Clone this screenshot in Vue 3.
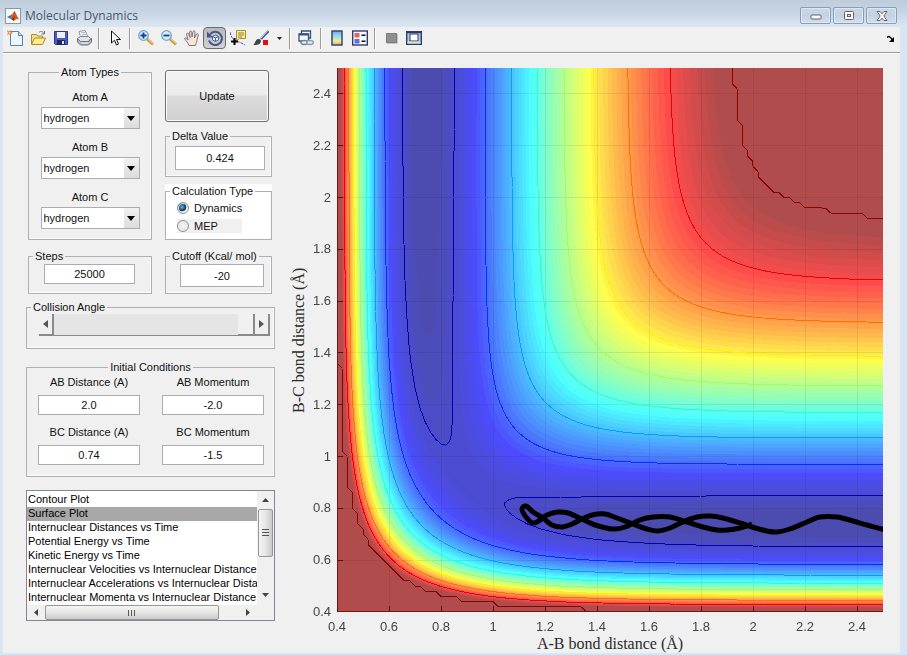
<script setup>
import { onMounted, ref } from 'vue'

const atoms = [
  { id: 'atom-a', label: 'Atom A' },
  { id: 'atom-b', label: 'Atom B' },
  { id: 'atom-c', label: 'Atom C' },
]
const elements = ['hydrogen', 'deuterium', 'fluorine', 'chlorine']
const atomTypes = ref(['hydrogen', 'hydrogen', 'hydrogen'])
const delta = ref('0.424')
const mode = ref('dynamics')
const steps = ref('25000')
const cutoff = ref('-20')
const angle = ref(180)
const conditions = ref([
  { id: 'ab-distance', label: 'AB Distance (A)', value: '2.0' },
  { id: 'ab-momentum', label: 'AB Momentum', value: '-2.0' },
  { id: 'bc-distance', label: 'BC Distance (A)', value: '0.74' },
  { id: 'bc-momentum', label: 'BC Momentum', value: '-1.5' },
])
const plots = [
  'Contour Plot',
  'Surface Plot',
  'Internuclear Distances vs Time',
  'Potential Energy vs Time',
  'Kinetic Energy vs Time',
  'Internuclear Velocities vs Internuclear Distance',
  'Internuclear Accelerations vs Internuclear Distance',
  'Internuclear Momenta vs Internuclear Distance',
]
const plotType = ref('Surface Plot')

// LEPS potential of the collinear H + H2 system, kcal/mol
const D = 109.5
const BETA = 1.942
const R0 = 0.7414
const SATO = 0.185
const V_MAX = -21.8
const V_MIN = -109.5

function pair(r) {
  const e = Math.exp(-BETA * (r - R0))
  return {
    q: (D / 4) * ((3 + SATO) * e * e - (2 + 6 * SATO) * e),
    j: (D / 4) * ((1 + 3 * SATO) * e * e - (6 + 2 * SATO) * e),
  }
}
function potential(ab, bc) {
  const a = pair(ab)
  const b = pair(bc)
  const c = pair(ab + bc)
  const root = Math.sqrt(((a.j - b.j) ** 2 + (b.j - c.j) ** 2 + (c.j - a.j) ** 2) / 2)
  return Math.min(V_MAX, (a.q + b.q + c.q - root) / (1 + SATO))
}

// 64-step jet colour map
function ramp(j) {
  if (j < 1 || j > 47) return 0
  if (j <= 16) return j / 16
  return j <= 31 ? 1 : (48 - j) / 16
}
function jet(v) {
  const t = (v - V_MIN) / (V_MAX - V_MIN)
  const i = 1 + Math.max(0, Math.min(62, Math.floor(t * 64)))
  return [ramp(i - 24), ramp(i - 8), ramp(i + 8)]
}

const LOW = 0.4
const SPAN = 2.1
const W = 546
const H = 544
const px = (r) => ((r - LOW) / SPAN) * W
const py = (r) => H - ((r - LOW) / SPAN) * H

// Contour lines by marching squares
const N = 105
const grid = Array.from({ length: N + 1 }, (_, i) =>
  Array.from({ length: N + 1 }, (_, k) => potential(LOW + i * 0.02, LOW + k * 0.02)),
)
function contour(level) {
  let d = ''
  for (let i = 0; i < N; i++) {
    for (let k = 0; k < N; k++) {
      const c = [[i, k], [i + 1, k], [i + 1, k + 1], [i, k + 1]]
      const cuts = []
      for (let s = 0; s < 4; s++) {
        const [p, q] = [c[s], c[(s + 1) % 4]]
        const a = grid[p[0]][p[1]] - level
        const b = grid[q[0]][q[1]] - level
        if (a < 0 === b < 0) continue
        const t = a / (a - b)
        const x = LOW + 0.02 * (p[0] + t * (q[0] - p[0]))
        const y = LOW + 0.02 * (p[1] + t * (q[1] - p[1]))
        cuts.push(px(x).toFixed(1) + ' ' + py(y).toFixed(1))
      }
      if (cuts.length >= 2) d += `M${cuts[0]}L${cuts[1]}`
    }
  }
  return d
}
const levels = [-105.4, -95.3, -84.9, -74.5, -64.1, -53.6, -43.2, -32.7, V_MAX - 0.001]
const contours = levels.map((v) => ({
  v,
  d: contour(v),
  color: `rgb(${jet(v).map((c) => Math.round(c * 255)).join(',')})`,
}))

const ticks = Array.from({ length: 11 }, (_, i) => {
  const v = (4 + 2 * i) / 10
  return { v, x: px(v), y: py(v), pct: ((v - LOW) / SPAN) * 100 }
})

// Reaction path in plot units
const path = [
  [415, 456], [403, 460], [390, 462], [380, 462], [366, 459], [350, 454], [333, 449], [316, 449],
  [303, 452], [288, 459], [276, 461], [258, 457], [245, 451], [231, 445], [221, 444], [210, 447],
  [203, 452], [196, 455], [189, 449], [185, 441], [189, 438], [196, 444], [206, 450], [215, 457],
  [225, 459], [235, 456], [245, 451], [255, 447], [268, 446], [280, 450], [296, 456], [310, 461],
  [321, 463], [333, 460], [346, 454], [360, 449], [373, 448], [386, 450], [403, 455], [415, 459],
  [430, 463], [440, 464], [453, 461], [470, 454], [483, 449], [500, 449], [516, 453], [530, 457],
  [548, 462],
]
let trajectory = `M${path[0]}`
for (let i = 0; i < path.length - 1; i++) {
  const a = path[Math.max(0, i - 1)]
  const b = path[i]
  const c = path[i + 1]
  const e = path[Math.min(path.length - 1, i + 2)]
  trajectory += `C${b[0] + (c[0] - a[0]) / 6},${b[1] + (c[1] - a[1]) / 6} ${c[0] - (e[0] - b[0]) / 6},${c[1] - (e[1] - b[1]) / 6} ${c}`
}

const surface = ref(null)
onMounted(() => {
  const ctx = surface.value.getContext('2d')
  const img = ctx.createImageData(W, H)
  for (let y = 0; y < H; y++) {
    for (let x = 0; x < W; x++) {
      const v = potential(LOW + ((x + 0.5) / W) * SPAN, LOW + ((H - y - 0.5) / H) * SPAN)
      const o = (y * W + x) * 4
      jet(v).forEach((c, n) => {
        img.data[o + n] = 76 + c * 178
      })
      img.data[o + 3] = 255
    }
  }
  ctx.putImageData(img, 0, 0)
})
</script>

<template>
  <div class="window">
    <header class="titlebar">
      <svg class="logo" viewBox="0 0 16 16" aria-hidden="true">
        <rect x=".5" y=".5" width="15" height="15" fill="#f6f8fa" stroke="#8b97a5" />
        <path d="M2 9l4-2 2-2-2 6z" fill="#3b76b5" />
        <path d="M5 11c2-1 3-7 4.500-8 1.500 2 3 6 4.500 9-2-2-3-1-5 1-1-1-2-2-4-2z" fill="#d9541e" />
        <path d="M9.500 3c.5 3-.5 7-3 8.500 1 0 2 1 2.500 1.500z" fill="#7c2412" />
      </svg>
      <h1>Molecular Dynamics</h1>
      <div class="window-buttons">
        <button type="button" aria-label="Minimize">
          <svg viewBox="0 0 12 10"><rect x="1" y="4" width="10" height="4" rx="1" fill="#fff" stroke="#59636f" /></svg>
        </button>
        <button type="button" aria-label="Maximize">
          <svg viewBox="0 0 12 10"><rect x="1.500" y=".5" width="9" height="8" rx="1" fill="#fff" stroke="#59636f" /><rect x="4.500" y="3.500" width="3" height="2" fill="#dfe8f1" stroke="#59636f" /></svg>
        </button>
        <button type="button" aria-label="Close">
          <svg viewBox="0 0 12 10"><path d="M1 .5h3l2 2.300 2-2.300h3L7.800 5 11 9.500H8L6 7.200 4 9.500H1L4.200 5z" fill="#fff" stroke="#59636f" /></svg>
        </button>
      </div>
    </header>

    <nav class="toolbar" aria-label="Figure tools">
      <button type="button" aria-label="New figure">
        <svg viewBox="0 0 16 16"><path d="M3.500 1.500h8l4 4v10h-12z" fill="#eef5fd" stroke="#5b7fae" /><path d="M11.500 1.500v4h4" fill="#c8dcf2" stroke="#5b7fae" /><path d="M0 0l2 1.500L3.500 0 4 2l2 1-2 1-.5 2L2 4 0 5l1-2z" fill="#e07a34" /><circle cx="2.600" cy="2.800" r="1" fill="#ffe6a8" /></svg>
      </button>
      <button type="button" aria-label="Open">
        <svg viewBox="0 0 16 16"><path d="M1.500 14V4.500h5l1 1.500h5v2" fill="#f7df84" stroke="#b58a1c" /><path d="M1.500 14.500l3-6.500h11l-3 6.500z" fill="#fdeb96" stroke="#b58a1c" /><path d="M9 2.500c2-2 4-1 5 1M14.500 1v3h-3" fill="none" stroke="#5a77a8" /></svg>
      </button>
      <button type="button" aria-label="Save">
        <svg viewBox="0 0 16 16"><path d="M1.500 1.500h13v13h-12l-1-1z" fill="#4a5cc4" stroke="#2c378c" /><rect x="4" y="2" width="8" height="6" fill="#eef1fb" /><rect x="4" y="10" width="8" height="5" fill="#20285e" /><rect x="9" y="11" width="2" height="3" fill="#dfe4f5" /></svg>
      </button>
      <button type="button" aria-label="Print">
        <svg viewBox="0 0 16 16"><path d="M4.500 7L3 1.500l6-1L12 7z" fill="#fff" stroke="#8c9aab" /><path d="M5 3l4-.6M5.500 5l4.500-.5" stroke="#8fb0dc" /><path d="M1.500 8.500l3-2h8l2 2-2 3h-10z" fill="#e2e4e7" stroke="#7d848c" /><path d="M1.500 8.500v3.500l3 3h8l3-3V8.500l-3 3h-8z" fill="#b4b9bf" stroke="#6c737b" /><path d="M5 13h7" stroke="#f2f4f6" /></svg>
      </button>
      <span class="sep"></span>
      <button type="button" aria-label="Edit plot">
        <svg viewBox="0 0 16 16"><path d="M4.500 1v12l3-2.800 2 4.800 2-1-2-4.500h4z" fill="#fff" stroke="#111" /></svg>
      </button>
      <span class="sep"></span>
      <button type="button" aria-label="Zoom in">
        <svg viewBox="0 0 16 16"><path d="M9 9l6 5.500" stroke="#d99a3c" stroke-width="3" /><path d="M9.500 8.500l6 5.500" stroke="#f3cf8b" /><circle cx="5.500" cy="5.500" r="4.800" fill="#d4ecfa" stroke="#6fa5d0" stroke-width="1.300" /><path d="M5.500 2.500v6M2.500 5.500h6" stroke="#1c3f8c" stroke-width="1.800" /></svg>
      </button>
      <button type="button" aria-label="Zoom out">
        <svg viewBox="0 0 16 16"><path d="M9 9l6 5.500" stroke="#d99a3c" stroke-width="3" /><path d="M9.500 8.500l6 5.500" stroke="#f3cf8b" /><circle cx="5.500" cy="5.500" r="4.800" fill="#d4ecfa" stroke="#6fa5d0" stroke-width="1.300" /><path d="M2.500 5.500h6" stroke="#1c3f8c" stroke-width="1.800" /></svg>
      </button>
      <button type="button" aria-label="Pan">
        <svg viewBox="0 0 16 16"><path d="M5 15.500c-1-3-3-4.500-4.500-7 1-1 2.500-.5 3.500 1.500L2.500 4c.5-1.500 2-1 2.300 0L6 7.500 5.500 2c.5-1.500 2-1.200 2.200 0L8 7l1-5.500c.6-1 2-.8 2 .5L10.500 8l2-4c1-1 2-.3 1.800 1L13 10c0 2-1 3-1.500 5.500z" fill="#fbe3d1" stroke="#6f6b78" stroke-width=".9" /></svg>
      </button>
      <button type="button" class="pressed" aria-label="Rotate 3D" aria-pressed="true">
        <svg viewBox="0 0 16 16"><path d="M3 4.500A6.600 6.600 0 1 1 2 10.500" fill="none" stroke="#42558b" stroke-width="2" /><path d="M0 1.500v6h6z" fill="#42558b" /><path d="M5.500 6.500l3-1.500 3 1.500v3.500l-3 1.500-3-1.500zM5.500 6.500l3 1.500 3-1.500M8.500 8v3.500" fill="#eef2fa" stroke="#42558b" stroke-width=".9" /></svg>
      </button>
      <button type="button" aria-label="Data cursor">
        <svg viewBox="0 0 16 16"><path d="M0 2c1 5 3 8 6 9s6 2 9 4" fill="none" stroke="#4a4fd0" stroke-dasharray="3 1" /><path d="M6.500.5h9v8h-6l-3 2z" fill="#f7ee8d" stroke="#a09434" /><path d="M8 3h6M8 5h6M8 7h4" stroke="#8c8240" /><path d="M4.500 8v7M1 11.500h7" stroke="#000" stroke-width="2" /></svg>
      </button>
      <button type="button" aria-label="Brush">
        <svg viewBox="0 0 16 16"><path d="M15.500 1L8 9" stroke="#4a5ca8" stroke-width="2.500" /><path d="M14.500 1L8 8" stroke="#cfd7f2" /><path d="M0 15c2-1 2-4 4-5.500 2-1 4 0 4 1.500 0 2.500-3 4.500-8 4z" fill="#3e434c" /><rect x="10" y="10" width="5" height="5" fill="#e80c0c" /></svg>
      </button>
      <button type="button" class="drop" aria-label="Brush options">
        <svg viewBox="0 0 5 3"><path d="M0 0h5L2.500 3z" fill="#222" /></svg>
      </button>
      <span class="sep"></span>
      <button type="button" aria-label="Link plots">
        <svg viewBox="0 0 16 16"><path d="M3.500 4V1h9v7H11" fill="#f3f7fc" stroke="#34507f" stroke-width="1.300" /><path d="M1 4h9.500v7H1z" fill="#f3f7fc" stroke="#34507f" stroke-width="1.300" /><path d="M1 4.500h9.500" stroke="#34507f" stroke-width="2" /><ellipse cx="6.500" cy="12.500" rx="3.500" ry="2" fill="#e4ebf3" stroke="#72849e" stroke-width="1.400" /><ellipse cx="12" cy="12.500" rx="3.300" ry="2" fill="#e4ebf3" stroke="#8b9cb4" stroke-width="1.400" /></svg>
      </button>
      <span class="sep"></span>
      <button type="button" aria-label="Insert colorbar">
        <svg viewBox="0 0 16 16">
          <defs><linearGradient id="bar" x1="0" y1="0" x2="0" y2="1"><stop offset="0" stop-color="#8c9bf0" /><stop offset=".35" stop-color="#86dff2" /><stop offset=".7" stop-color="#f4ec96" /><stop offset="1" stop-color="#f2a07c" /></linearGradient></defs>
          <rect x="3" y="1" width="10" height="14" fill="url(#bar)" stroke="#2c3e68" stroke-width="1.400" />
        </svg>
      </button>
      <button type="button" aria-label="Insert legend">
        <svg viewBox="0 0 16 16"><rect x=".7" y="1" width="14.600" height="14" fill="#fbfcff" stroke="#2c3e68" stroke-width="1.400" /><rect x="2.500" y="3" width="5" height="4.500" fill="#e86060" /><rect x="2.500" y="9" width="5" height="4.500" fill="#5d6fe0" /><path d="M9.500 5.300h4M9.500 11.300h4" stroke="#111" stroke-width="1.400" /></svg>
      </button>
      <span class="sep"></span>
      <button type="button" aria-label="Hide plot tools" disabled>
        <svg viewBox="0 0 16 16"><rect x="3.500" y="3.500" width="10" height="9" fill="#8f8f8f" stroke="#7d7d7d" /><path d="M4 13.500h10.500V4" fill="none" stroke="#c4c4c4" /></svg>
      </button>
      <button type="button" aria-label="Show plot tools">
        <svg viewBox="0 0 16 16"><rect x=".7" y="1.700" width="14.600" height="12.600" fill="#b4c6dc" stroke="#2c3e68" stroke-width="1.400" /><path d="M.5 2.500h15" stroke="#2c3e68" stroke-width="1.500" /><rect x="4" y="4" width="8" height="7" fill="#fff" stroke="#2c3e68" /><path d="M1.500 12.500h13" stroke="#dfe3d2" stroke-width="2" /></svg>
      </button>
      <button type="button" class="dock" aria-label="Dock figure">
        <svg viewBox="0 0 8 7"><path d="M7 2v5H2z" fill="#000" /><path d="M0 2.500C2 .5 3.500 2 5.500 5" fill="none" stroke="#000" stroke-width="1.500" /></svg>
      </button>
    </nav>

    <main class="content">
      <form class="panel" @submit.prevent>
        <div class="columns">
          <fieldset class="group atoms">
            <legend>Atom Types</legend>
            <div v-for="(atom, i) in atoms" :key="atom.id" class="atom">
              <label :for="atom.id">{{ atom.label }}</label>
              <div class="combo">
                <select :id="atom.id" v-model="atomTypes[i]">
                  <option v-for="el in elements" :key="el">{{ el }}</option>
                </select>
                <span class="arrow"><svg viewBox="0 0 8 5"><path d="M0 0h8L4 5z" /></svg></span>
              </div>
            </div>
          </fieldset>

          <div class="stack">
            <button type="submit" class="update">Update</button>
            <fieldset class="group delta">
              <legend>Delta Value</legend>
              <input v-model="delta" type="text" aria-label="Delta Value" />
            </fieldset>
            <div class="white">
              <fieldset class="group calc">
                <legend>Calculation Type</legend>
                <label><input v-model="mode" type="radio" name="mode" value="dynamics" />Dynamics</label>
                <label class="shaded"><input v-model="mode" type="radio" name="mode" value="mep" />MEP</label>
              </fieldset>
            </div>
          </div>

          <fieldset class="group steps">
            <legend>Steps</legend>
            <input v-model="steps" type="text" aria-label="Steps" />
          </fieldset>
          <fieldset class="group cutoff">
            <legend>Cutoff (Kcal/ mol)</legend>
            <input v-model="cutoff" type="text" aria-label="Cutoff (Kcal/ mol)" />
          </fieldset>
        </div>

        <fieldset class="group collision">
          <legend>Collision Angle</legend>
          <div class="slider">
            <button type="button" aria-label="Decrease angle"><svg viewBox="0 0 5 8"><path d="M5 0v8L0 4z" /></svg></button>
            <input v-model="angle" type="range" min="0" max="180" aria-label="Collision Angle" />
            <button type="button" aria-label="Increase angle"><svg viewBox="0 0 5 8"><path d="M0 0v8l5-4z" /></svg></button>
          </div>
        </fieldset>

        <fieldset class="group initial">
          <legend>Initial Conditions</legend>
          <div class="conditions">
            <div v-for="c in conditions" :key="c.id" class="condition">
              <label :for="c.id">{{ c.label }}</label>
              <input :id="c.id" v-model="c.value" type="text" />
            </div>
          </div>
        </fieldset>

        <div class="listbox">
          <select v-model="plotType" size="8" aria-label="Plot type">
            <option v-for="p in plots" :key="p">{{ p }}</option>
          </select>
          <div class="vbar">
            <svg viewBox="0 0 7 4"><path d="M0 4h7L3.500 0z" /></svg>
            <span class="thumb"><i></i><i></i><i></i></span>
            <svg viewBox="0 0 7 4"><path d="M0 0h7L3.500 4z" /></svg>
          </div>
          <div class="hbar">
            <svg viewBox="0 0 4 7"><path d="M4 0v7L0 3.500z" /></svg>
            <span class="thumb"><i></i><i></i><i></i></span>
            <svg viewBox="0 0 4 7"><path d="M0 0v7l4-3.500z" /></svg>
          </div>
        </div>
      </form>

      <figure class="figure">
        <div class="ylabel">B-C bond distance (Å)</div>
        <div class="yticks">
          <span v-for="t in ticks" :key="t.v" :style="{ bottom: t.pct + '%' }">{{ t.v }}</span>
        </div>
        <canvas ref="surface" class="surface" :width="W" :height="H"></canvas>
        <svg class="overlay" :viewBox="`0 0 ${W} ${H}`" preserveAspectRatio="none" aria-hidden="true">
          <g class="gridlines">
            <path v-for="t in ticks" :key="t.v" :d="`M${t.x} 0V${H}M0 ${t.y}H${W}`" />
          </g>
          <path v-for="c in contours" :key="c.v" class="contour" :d="c.d" :stroke="c.color" />
          <path class="axis" :d="`M.5 0V${H - 0.5}H${W}`" />
          <g class="tickmarks">
            <path v-for="t in ticks" :key="t.v" :d="`M${t.x} ${H}v-6M0 ${t.y}h6`" />
          </g>
          <path class="trajectory" :d="trajectory" />
        </svg>
        <div class="xticks">
          <span v-for="t in ticks" :key="t.v" :style="{ left: t.pct + '%' }">{{ t.v }}</span>
        </div>
        <figcaption class="xlabel">A-B bond distance (Å)</figcaption>
      </figure>
    </main>
  </div>
</template>

<style>
body {
  margin: 0;
  background: #f0f0f0;
}
</style>

<style scoped>
* {
  box-sizing: border-box;
}
.window {
  display: flex;
  flex-direction: column;
  min-height: 100vh;
  border: solid #d9e5f2;
  border-width: 0 7px 2px 3px;
  background: #f0f0f0;
  color: #111;
  font: 11px/14px 'Liberation Sans', Arial, sans-serif;
}
button,
input,
select {
  margin: 0;
  padding: 0;
  font: inherit;
  color: inherit;
}
svg {
  display: block;
}

.titlebar {
  display: flex;
  align-items: center;
  gap: 4px;
  height: 27px;
  margin: 0 -7px 0 -3px;
  padding: 4px 10px 0 5px;
  background: linear-gradient(#bfccda, #c6d3e2 40%, #dbe6f2);
}
.logo {
  width: 16px;
  height: 16px;
}
h1 {
  margin: 0;
  font: 12px/16px 'Open Sans', 'Noto Sans', sans-serif;
  color: #44586e;
}
.window-buttons {
  display: flex;
  gap: 2px;
  margin-left: auto;
}
.window-buttons button {
  display: grid;
  place-items: center;
  width: 31px;
  height: 17px;
  border: 1px solid #8a9db3;
  border-radius: 2px;
  background: linear-gradient(#cbd8e6, #c3d1e1 50%, #d3dfec);
  box-shadow: inset 0 0 0 1px #dde7f1;
}
.window-buttons svg {
  width: 12px;
  height: 10px;
}

.toolbar {
  display: flex;
  align-items: center;
  height: 26px;
  padding-bottom: 3px;
  border-bottom: 1px solid #9a9a9a;
  box-shadow: 0 1px #fff;
}
.toolbar button {
  display: grid;
  place-items: center;
  width: 23px;
  height: 22px;
  border: 1px solid transparent;
  background: none;
}
.toolbar button svg {
  width: 16px;
  height: 16px;
  fill: none;
}
.toolbar .pressed {
  border-color: #6b6b6b;
  border-radius: 4px;
  background: linear-gradient(#b9b9b9, #d2d2d2);
}
.toolbar .drop {
  width: 14px;
}
.toolbar .drop svg {
  width: 5px;
  height: 3px;
}
.toolbar .dock {
  width: 18px;
  margin-left: auto;
}
.toolbar .dock svg {
  width: 8px;
  height: 7px;
}
.sep {
  width: 2px;
  height: 21px;
  margin: 0 3px;
  border-left: 1px solid #9c9c9c;
  border-right: 1px solid #fff;
}

.content {
  display: flex;
  flex: 1;
  padding-top: 1px;
}
.panel {
  flex: none;
  width: 287px;
  padding: 11px 15px 0 23px;
}
.columns {
  display: grid;
  grid-template-columns: 124px 107px;
  gap: 9px 13px;
  padding: 0 2px;
}
.group {
  min-width: 0;
  margin: 0;
  padding: 0;
  border: 1px solid #b0b0b0;
  box-shadow: inset -1px -1px #fbfbfb;
}
.group legend {
  margin-left: 4px;
  padding: 0 2px;
  line-height: 14px;
}
.group input[type='text'] {
  display: block;
  border: 1px solid #abadb3;
  border-radius: 0;
  background: #fff;
  text-align: center;
}
.group.atoms {
  height: 175px;
}
.group.atoms legend,
.group.initial legend {
  margin: 0 auto;
}
.atom {
  margin: 11px 0 0;
  text-align: center;
}
.atom label {
  display: block;
}
.combo {
  display: grid;
  grid-template-columns: 1fr 15px;
  width: 99px;
  height: 22px;
  margin: 3px auto 0;
  border: 1px solid #abadb3;
  background: #fff;
}
.combo select {
  grid-area: 1 / 1 / 2 / 3;
  padding-left: 2px;
  border: 0;
  background: none;
  appearance: none;
}
.combo .arrow {
  display: grid;
  place-items: center;
  grid-area: 1 / 2;
  background: linear-gradient(#f2f2f2, #dcdcdc);
  pointer-events: none;
}
.arrow svg {
  width: 8px;
  height: 5px;
}
.stack {
  display: flex;
  flex-direction: column;
  gap: 7px;
  padding-top: 5px;
}
.update {
  width: 104px;
  height: 52px;
  border: 1px solid #707070;
  border-radius: 3px;
  background: linear-gradient(#f2f2f2, #ebebeb 48%, #dddddd 50%, #cfcfcf);
  box-shadow: inset 0 0 0 1px #fafafa;
}
.group.delta {
  height: 48px;
}
.delta input {
  width: 90px;
  height: 24px;
  margin: 3px auto 0 9px;
}
.white {
  background: #fff;
}
.group.calc {
  height: 56px;
}
.calc label {
  display: flex;
  align-items: center;
  gap: 5px;
  width: 65px;
  height: 14px;
  margin: 3px 0 4px 11px;
}
.calc .shaded {
  background: #f0f0f0;
}
.calc input {
  flex: none;
  width: 12px;
  height: 12px;
  border: 1px solid #8e8f8f;
  border-radius: 50%;
  background: radial-gradient(#f8f8f8, #d4d4d4);
  box-shadow: inset 0 0 0 1px #f4f4f4;
  appearance: none;
}
.calc input:checked {
  background: radial-gradient(circle at 40% 40%, #59bfe8 0, #1b4f78 35%, #13334f 48%, #e9eef2 55%);
}
.group.steps,
.group.cutoff {
  height: 45px;
}
.steps input {
  width: 91px;
  height: 20px;
  margin: 1px 0 0 15px;
}
.cutoff input {
  width: 84px;
  height: 23px;
  margin: 1px 0 0 14px;
}
.group.collision {
  height: 49px;
  margin-top: 6px;
}
.slider {
  display: grid;
  grid-template-columns: 15px 1fr 15px;
  height: 22px;
  margin: 0 4px 0 12px;
  border-bottom: 1px solid #8a8a8a;
}
.slider button {
  display: grid;
  place-items: center;
  border: solid #8a8a8a;
  border-width: 0 2px 1px 0;
  background: #f0f0f0;
}
.slider svg {
  width: 5px;
  height: 8px;
  fill: #555;
}
.slider input {
  width: 100%;
  height: 21px;
  background: #e5e5e5;
  appearance: none;
}
.slider input::-webkit-slider-thumb {
  width: 17px;
  height: 21px;
  border: solid #8a8a8a;
  border-width: 0 2px 1px 0;
  background: #f0f0f0;
  appearance: none;
}
.group.initial {
  height: 117px;
  margin-top: 11px;
}
.conditions {
  display: grid;
  grid-template-columns: 102px 102px;
  gap: 10px 22px;
  padding: 1px 11px 0;
}
.condition {
  text-align: center;
}
.condition label {
  display: block;
  margin-bottom: 6px;
}
.condition input {
  width: 102px;
  height: 20px;
}
.listbox {
  display: grid;
  grid-template: 1fr 15px / 1fr 17px;
  height: 131px;
  margin-top: 13px;
  border: 1px solid #828790;
  background: #f0f0f0;
}
.listbox select {
  min-width: 0;
  height: 114px;
  padding: 2px 0 0;
  border: 0;
  outline: 0;
  background: #fff;
  overflow: hidden;
  appearance: none;
}
.listbox option {
  min-height: 14px;
  padding: 0 0 0 1px;
  line-height: 14px;
  color: #000;
}
.listbox option:checked {
  background: #a8a8a8 linear-gradient(#a8a8a8, #a8a8a8);
}
.vbar,
.hbar {
  display: flex;
  align-items: center;
  justify-content: space-between;
}
.vbar {
  flex-direction: column;
  padding: 7px 0 8px;
}
.hbar {
  padding: 0 7px;
}
.vbar svg {
  width: 7px;
  height: 4px;
  fill: #444;
}
.hbar svg {
  width: 4px;
  height: 7px;
  fill: #444;
}
.thumb {
  display: flex;
  align-items: center;
  justify-content: center;
  gap: 2px;
  border: 1px solid #979797;
  border-radius: 2px;
}
.vbar .thumb {
  flex-direction: column;
  width: 15px;
  height: 48px;
  margin: 0 0 30px;
  background: linear-gradient(90deg, #f5f5f5, #e6e6e6 50%, #c9c9c9);
}
.hbar .thumb {
  width: 174px;
  height: 15px;
  margin-right: 21px;
  background: linear-gradient(#f5f5f5, #e6e6e6 50%, #c9c9c9);
}
.vbar i {
  width: 7px;
  height: 1px;
  background: #555;
}
.hbar i {
  width: 1px;
  height: 6px;
  background: #555;
}

.figure {
  display: grid;
  flex: 1;
  grid-template: 1fr 23px 18px / 20px 27px 1fr;
  min-width: 0;
  margin: 0;
  padding: 14px 17px 0 0;
}
.ylabel,
.xlabel {
  font: 16px/18px 'Liberation Serif', 'Times New Roman', serif;
  color: #2b2b2b;
  text-align: center;
}
.ylabel {
  writing-mode: vertical-rl;
  transform: rotate(180deg);
}
.xlabel {
  grid-area: 3 / 3;
}
.yticks,
.xticks {
  position: relative;
  font-size: 13px;
  line-height: 16px;
  color: #444;
}
.yticks span {
  position: absolute;
  right: 6px;
  transform: translateY(50%);
}
.xticks {
  grid-area: 2 / 3;
}
.xticks span {
  position: absolute;
  top: 7px;
  transform: translateX(-50%);
}
.surface,
.overlay {
  grid-area: 1 / 3;
  width: 100%;
  height: 100%;
  min-height: 0;
}
.overlay {
  fill: none;
  overflow: hidden;
}
.gridlines {
  stroke: #000;
  stroke-opacity: 0.08;
  shape-rendering: crispEdges;
}
.contour {
  shape-rendering: crispEdges;
}
.axis {
  stroke: #7c1414;
}
.tickmarks {
  stroke: #5a1010;
  shape-rendering: crispEdges;
}
.trajectory {
  stroke: #000;
  stroke-width: 5;
  stroke-linejoin: round;
}
</style>
